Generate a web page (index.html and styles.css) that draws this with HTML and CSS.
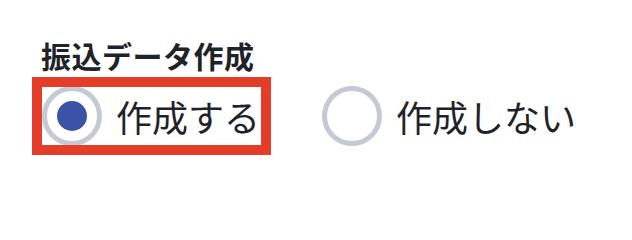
FILE: index.html
```html
<!DOCTYPE html>
<html lang="ja">
<head>
<meta charset="utf-8">
<link rel="stylesheet" href="styles.css">
</head>
<body>
<div class="field">
  <div class="field-label">振込データ作成</div>
  <div class="options">
    <label class="option option--focused">
      <span class="radio radio--checked"><span class="radio-dot"></span></span>
      <span class="option-text">作成する</span>
    </label>
    <label class="option">
      <span class="radio"></span>
      <span class="option-text">作成しない</span>
    </label>
  </div>
</div>
</body>
</html>
```
FILE: styles.css
```css
html, body {
  margin: 0;
  padding: 0;
  background: #ffffff;
}
body {
  width: 632px;
  height: 200px;
  overflow: hidden;
  font-family: "Noto Sans CJK JP", "Noto Sans", sans-serif;
  color: #1f2328;
}
.field {
  padding: 40px 0 0 41px;
}
.field-label {
  font-size: 30px;
  line-height: 30px;
  font-weight: 700;
  letter-spacing: 0.5px;
  color: #1f2328;
}
.options {
  display: flex;
  align-items: center;
  margin-top: 17px;
  margin-left: 1px;
}
.option {
  display: flex;
  align-items: center;
  gap: 14px;
  height: 58px;
  padding-right: 1px;
}
.option + .option {
  margin-left: 61px;
}
.option--focused {
  outline: 10px solid #e43d2a;
}
.radio {
  box-sizing: border-box;
  flex: none;
  width: 60px;
  height: 60px;
  border: 5px solid #c4c9d3;
  border-radius: 50%;
  background: #ffffff;
  display: flex;
  align-items: center;
  justify-content: center;
}
.radio-dot {
  width: 30px;
  height: 30px;
  border-radius: 50%;
  background: #3b52a6;
}
.option-text {
  font-size: 36px;
  line-height: 36px;
  color: #1f2328;
  white-space: nowrap;
}
```
